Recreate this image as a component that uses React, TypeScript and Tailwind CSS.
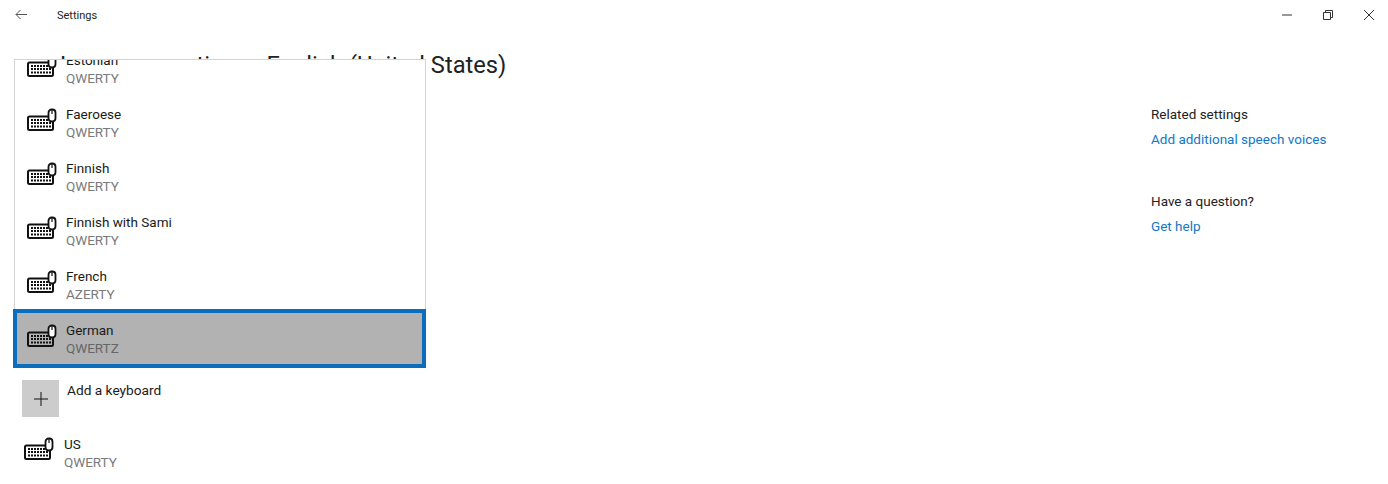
const font = "font-['Roboto',sans-serif]";

function KeyboardIcon({ className = '' }: { className?: string }) {
  return (
    <svg width="30" height="24" viewBox="0 0 30 24" className={`shrink-0 ${className}`} fill="none" stroke="#111">
      <path d="M21 8.500H2.500a1.500 1.500 0 0 0-1.500 1.500V20.500a1.500 1.500 0 0 0 1.500 1.500H24.500a1.500 1.500 0 0 0 1.500-1.500V14" strokeWidth="2" />
      <path d="M4 12h17M4 15h20M4 18.500h20" strokeWidth="1.800" strokeDasharray="2 1" />
      <rect x="21.500" y="1.500" width="7" height="12" rx="3.200" fill="#fff" strokeWidth="1.800" />
      <path d="M25 2v4" strokeWidth="1.200" />
    </svg>
  );
}

function LayoutRow({ name, layout }: { name: string; layout: string }) {
  return (
    <div className="flex h-[54px] items-center gap-[9px] border-x border-[#d4d4d4] bg-white pl-[12px]">
      <KeyboardIcon className="-mt-[8px]" />
      <div className="-mt-[2px] text-[13.500px] leading-[18px]">
        <div className="text-[#1a1a1a]">{name}</div>
        <div className="text-[#7a7a7a]">{layout}</div>
      </div>
    </div>
  );
}

const rows = [
  { name: 'Estonian', layout: 'QWERTY' },
  { name: 'Faeroese', layout: 'QWERTY' },
  { name: 'Finnish', layout: 'QWERTY' },
  { name: 'Finnish with Sami', layout: 'QWERTY' },
  { name: 'French', layout: 'AZERTY' },
];

export default function App() {
  return (
    <div className={`relative flex h-[484px] flex-col overflow-hidden bg-white text-[#111] ${font}`}>
      {/* Title bar */}
      <div className="flex h-[29px] items-center">
        <svg width="13" height="11" viewBox="0 0 13 11" className="ml-[15px]" fill="none" stroke="#555" strokeWidth="1">
          <path d="M12 5.500H1M5.500 1 1 5.500 5.500 10" />
        </svg>
        <span className="ml-[29px] mt-[3px] text-[11px] text-[#222]">Settings</span>
        <div className="ml-auto flex items-center gap-[31px] pr-[14px]">
          <svg width="10" height="10" viewBox="0 0 10 10" stroke="#333" strokeWidth="1"><path d="M0 5h10" /></svg>
          <svg width="10" height="10" viewBox="0 0 10 10" fill="none" stroke="#333" strokeWidth="1"><path d="M.5 2.500h7v7h-7zM2.500 2.500v-2h7v7h-2" /></svg>
          <svg width="10" height="10" viewBox="0 0 10 10" stroke="#333" strokeWidth="1"><path d="m0 0 10 10M10 0 0 10" /></svg>
        </div>
      </div>

      <div className="flex flex-1">
        {/* Main column */}
        <div className="flex-1">
          <h1 className="ml-[60px] mt-[18px] text-[23.700px] font-normal leading-[36px] text-[#222]">
            Language options: <span className="ml-[6px]">English (United States)</span>
          </h1>
          <div className="ml-[22px] mt-[297px] flex items-start gap-[8px]">
            <div className="flex h-[37px] w-[37px] items-center justify-center bg-[#ccc]">
              <svg width="16" height="16" viewBox="0 0 16 16" stroke="#111" strokeWidth="1"><path d="M8 1v14M1 8h14" /></svg>
            </div>
            <span className="text-[13.700px] leading-[20px] text-[#1a1a1a]">Add a keyboard</span>
          </div>
          <div className="ml-[24px] mt-[18px] flex items-center gap-[10px]">
            <KeyboardIcon className="-mt-[8px]" />
            <div className="text-[13.500px] leading-[18px]">
              <div className="text-[#1a1a1a]">US</div>
              <div className="text-[#7a7a7a]">QWERTY</div>
            </div>
          </div>
        </div>

        {/* Related links */}
        <div className="w-[237px] pt-[75px] text-[13.500px] leading-[20px]">
          <div className="text-[#222]">Related settings</div>
          <a className="mt-[5px] block text-[#0f78c8]">Add additional speech voices</a>
          <div className="mt-[42px] text-[#222]">Have a question?</div>
          <a className="mt-[5px] block text-[#0f78c8]">Get help</a>
        </div>
      </div>

      {/* Keyboard layout flyout */}
      <div className="absolute left-[13px] top-[59px] h-[309px] w-[413px] overflow-hidden">
        <div className="-mt-[17px] ml-px border-t border-[#d4d4d4]">
          {rows.map((r) => (
            <LayoutRow key={r.name} name={r.name} layout={r.layout} />
          ))}
        </div>
        <div className="-mt-[4px] flex h-[59px] items-center gap-[9px] border-[4px] border-[#0a6ebd] bg-[#b2b2b2] pl-[10px]">
          <KeyboardIcon className="-mt-[6px]" />
          <div className="text-[13.500px] leading-[18px]">
            <div className="text-[#1a1a1a]">German</div>
            <div className="text-[#666]">QWERTZ</div>
          </div>
        </div>
      </div>
      <div className="absolute left-[14px] top-[59px] h-px w-[412px] bg-[#d4d4d4]" />
    </div>
  );
}
